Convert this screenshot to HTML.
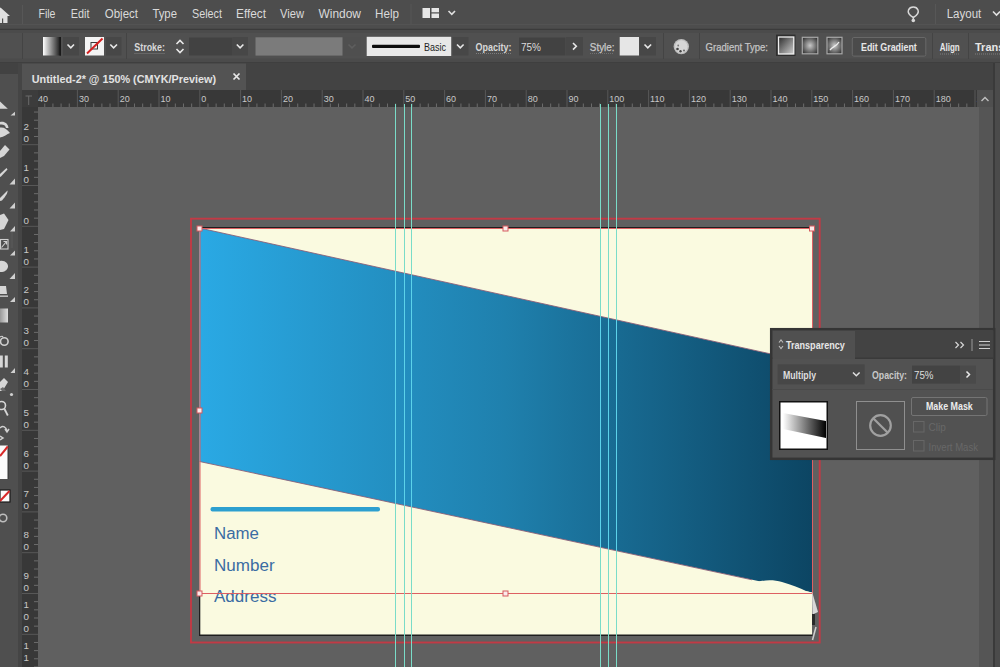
<!DOCTYPE html>
<html><head><meta charset="utf-8">
<style>
*{margin:0;padding:0;box-sizing:border-box}
html,body{width:1000px;height:667px;overflow:hidden;background:#606060;font-family:"Liberation Sans",sans-serif}
svg{position:absolute;left:0;top:0}
text{font-family:"Liberation Sans",sans-serif}
.m{font-size:12.5px;fill:#dadada}
.c{font-size:11px;fill:#d8d8d8;font-weight:bold}
.rn{font-size:9px;fill:#c8c8c8}
.rv{font-size:9.8px;fill:#c8c8c8}
.p{font-size:10.5px;fill:#dedede}
</style></head><body>
<svg width="1000" height="667" viewBox="0 0 1000 667">
<defs>
  <linearGradient id="g1" x1="199.5" y1="0" x2="812" y2="0" gradientUnits="userSpaceOnUse">
    <stop offset="0" stop-color="#2aa9e4"/>
    <stop offset="0.5" stop-color="#1f80ad"/>
    <stop offset="1" stop-color="#0c4563"/>
  </linearGradient>
  <linearGradient id="gw" x1="0" y1="0" x2="1" y2="0">
    <stop offset="0" stop-color="#ffffff"/>
    <stop offset="1" stop-color="#111111"/>
  </linearGradient>
  <linearGradient id="gd" x1="0" y1="0" x2="1" y2="1">
    <stop offset="0" stop-color="#2a2a2a"/>
    <stop offset="1" stop-color="#d0d0d0"/>
  </linearGradient>
  <radialGradient id="gr" cx="0.5" cy="0.5" r="0.6">
    <stop offset="0" stop-color="#c8c8c8"/>
    <stop offset="1" stop-color="#3a3a3a"/>
  </radialGradient>
  <linearGradient id="gtool" x1="0" y1="0" x2="1" y2="0">
    <stop offset="0" stop-color="#999"/>
    <stop offset="1" stop-color="#ddd"/>
  </linearGradient>
  <linearGradient id="gt" x1="0" y1="0" x2="1" y2="0">
    <stop offset="0" stop-color="#ffffff"/>
    <stop offset="1" stop-color="#000000"/>
  </linearGradient>
  <clipPath id="cpb"><polygon points="199.5,228 812,363 812,592.5 199.5,461.5"/></clipPath>
</defs>

<!-- ============ MENU BAR ============ -->
<rect x="0" y="0" width="1000" height="28.5" fill="#4d4d4d"/>
<rect x="0" y="24" width="1000" height="1" fill="#535353"/>
<rect x="0" y="28.5" width="1000" height="1.5" fill="#3b3b3b"/>
<!-- home icon -->
<path d="M-9 16 L0.5 7.5 L10 16 L7.5 16 L7.5 23 L3.2 23 L3.2 18.5 L2 18.5 L2 23 L-7 23 Z" fill="#e0e0e0"/>
<rect x="22" y="5" width="1" height="19" fill="#575757"/>
<text class="m" x="38.5" y="18" textLength="17" lengthAdjust="spacingAndGlyphs">File</text>
<text class="m" x="70.8" y="18" textLength="18.7" lengthAdjust="spacingAndGlyphs">Edit</text>
<text class="m" x="104.8" y="18" textLength="33.2" lengthAdjust="spacingAndGlyphs">Object</text>
<text class="m" x="152.4" y="18" textLength="24.6" lengthAdjust="spacingAndGlyphs">Type</text>
<text class="m" x="192" y="18" textLength="30" lengthAdjust="spacingAndGlyphs">Select</text>
<text class="m" x="236" y="18" textLength="30" lengthAdjust="spacingAndGlyphs">Effect</text>
<text class="m" x="280" y="18" textLength="24" lengthAdjust="spacingAndGlyphs">View</text>
<text class="m" x="318.5" y="18" textLength="42.5" lengthAdjust="spacingAndGlyphs">Window</text>
<text class="m" x="375" y="18" textLength="24" lengthAdjust="spacingAndGlyphs">Help</text>
<rect x="410.5" y="4" width="1" height="20" fill="#575757"/>
<!-- workspace icon -->
<rect x="422.5" y="8" width="7.5" height="10" fill="#e6e6e6"/>
<rect x="431.5" y="8" width="7.5" height="4.3" fill="#e6e6e6"/>
<rect x="431.5" y="13.5" width="7.5" height="4.5" fill="#e6e6e6"/>
<path d="M448.5 11 L451.8 14.3 L455 11" fill="none" stroke="#e0e0e0" stroke-width="1.6"/>
<!-- bulb -->
<path d="M913.3 20 L913.3 17.5 C909 15 907.5 12.5 908.5 10 C909.5 7.5 911.5 7 913.3 7 C915 7 917 7.5 918 10 C919 12.5 917.5 15 913.3 17.5" fill="none" stroke="#d8d8d8" stroke-width="1.5"/>
<circle cx="913.3" cy="20.5" r="1.8" fill="#d8d8d8"/>
<rect x="935" y="4" width="1" height="20" fill="#575757"/>
<text class="m" x="946.7" y="17.8" textLength="34.6" lengthAdjust="spacingAndGlyphs">Layout</text>
<path d="M993 11.5 L996.5 15 L1000 11.5" fill="none" stroke="#e0e0e0" stroke-width="1.6"/>

<!-- ============ CONTROL BAR ============ -->
<rect x="0" y="30" width="1000" height="32" fill="#4b4b4b"/>
<rect x="0" y="33" width="1000" height="25.5" fill="#505050"/>
<rect x="0" y="62" width="1000" height="1" fill="#3f3f3f"/>
<!-- group separators -->
<rect x="22" y="33" width="1" height="26" fill="#444"/>
<rect x="126" y="33" width="1" height="26" fill="#444"/>
<rect x="663" y="33" width="1" height="26" fill="#444"/>
<rect x="699" y="33" width="1" height="26" fill="#444"/>
<rect x="932" y="33" width="1" height="26" fill="#444"/>
<rect x="968" y="33" width="1" height="26" fill="#444"/>
<!-- fill swatch -->
<rect x="43" y="37" width="18" height="18.5" fill="url(#gw)"/>
<rect x="59.5" y="37" width="1.5" height="18.5" fill="#1a1a1a"/>
<rect x="63" y="37" width="16" height="18.5" fill="#474747"/>
<path d="M67.5 44.5 L70.8 47.8 L74 44.5" fill="none" stroke="#e8e8e8" stroke-width="1.6"/>
<!-- stroke swatch -->
<rect x="85" y="37" width="19" height="18.5" fill="#f4f4f4"/>
<rect x="91" y="42.5" width="6.5" height="6.5" fill="none" stroke="#3a3a3a" stroke-width="1"/>
<path d="M87 53.5 L102.5 38.5" stroke="#d42020" stroke-width="2"/>
<rect x="106" y="37" width="15.5" height="18.5" fill="#474747"/>
<path d="M110.3 44.5 L113.6 47.8 L117 44.5" fill="none" stroke="#e8e8e8" stroke-width="1.6"/>
<!-- Stroke: -->
<text class="c" x="134.3" y="50.5" textLength="30.6" lengthAdjust="spacingAndGlyphs">Stroke:</text>
<path d="M134.5 53.5 H165" stroke="#8a8a8a" stroke-width="0.8" stroke-dasharray="1 1"/>

<path d="M176.5 44 L180 40.5 L183.5 44 M176.5 49 L180 52.5 L183.5 49" fill="none" stroke="#e8e8e8" stroke-width="1.6"/>
<rect x="189" y="37.5" width="43.5" height="18" fill="#424242"/>
<rect x="232.5" y="37" width="15.5" height="18.5" fill="#474747"/>
<path d="M236.8 44.5 L240.1 47.8 L243.4 44.5" fill="none" stroke="#e8e8e8" stroke-width="1.6"/>
<!-- gray field -->
<rect x="255.5" y="37.3" width="87" height="18.3" fill="#7b7b7b"/>
<rect x="343" y="37" width="18" height="18.5" fill="#4f4f4f"/>
<path d="M348.5 44.5 L352 47.8 L355.5 44.5" fill="none" stroke="#5e5e5e" stroke-width="1.6"/>
<!-- Basic -->
<rect x="366.7" y="36.8" width="84.5" height="19.2" fill="#e8e8e8"/>
<rect x="372" y="44.8" width="48" height="3.2" rx="1" fill="#0d0d0d"/>
<text x="424" y="50.7" font-size="11" fill="#1f1f1f" textLength="22" lengthAdjust="spacingAndGlyphs">Basic</text>
<rect x="452.5" y="37" width="16" height="18.5" fill="#474747"/>
<path d="M457 44.5 L460.3 47.8 L463.6 44.5" fill="none" stroke="#e8e8e8" stroke-width="1.6"/>
<!-- Opacity -->
<text class="c" x="475.6" y="50.5" textLength="35.8" lengthAdjust="spacingAndGlyphs">Opacity:</text>
<path d="M476 53.5 H511" stroke="#8a8a8a" stroke-width="0.8" stroke-dasharray="1 1"/>
<rect x="519" y="37.5" width="46.5" height="18" fill="#424242"/>
<text x="521" y="50.5" font-size="11" fill="#dcdcdc" textLength="20" lengthAdjust="spacingAndGlyphs">75%</text>
<rect x="566" y="37" width="17" height="18.5" fill="#474747"/>
<path d="M573 43 L576.3 46.3 L573 49.6" fill="none" stroke="#e8e8e8" stroke-width="1.6"/>
<!-- Style -->
<text class="c" x="589.8" y="50.5" textLength="24.7" lengthAdjust="spacingAndGlyphs" style="fill:#c8c8c8;font-weight:normal;stroke:#c8c8c8;stroke-width:0.25">Style:</text>
<path d="M590 53.5 H614" stroke="#7a7a7a" stroke-width="0.8" stroke-dasharray="1 1"/>
<rect x="619.7" y="37" width="19.3" height="18.5" fill="#e6e6e6"/>
<rect x="639.5" y="37" width="16.5" height="18.5" fill="#474747"/>
<path d="M644.5 44.5 L647.8 47.8 L651.1 44.5" fill="none" stroke="#e8e8e8" stroke-width="1.6"/>
<!-- globe -->
<circle cx="681.3" cy="46.6" r="7.7" fill="#bdbdbd"/>
<circle cx="681.3" cy="46.6" r="6.3" fill="#d6d6d6"/>
<circle cx="677.5" cy="49" r="1.3" fill="#444"/>
<circle cx="680.5" cy="51.3" r="1.2" fill="#444"/>
<circle cx="678.2" cy="45.5" r="0.9" fill="#777"/>
<circle cx="684" cy="50.5" r="1" fill="#666"/>
<!-- Gradient Type -->
<text class="c" x="705.6" y="50.5" textLength="62.4" lengthAdjust="spacingAndGlyphs" style="fill:#c4c4c4;font-weight:normal;stroke:#c4c4c4;stroke-width:0.25">Gradient Type:</text>
<rect x="776" y="34.6" width="19.5" height="21.4" fill="#2f2f2f"/>
<rect x="778.5" y="37" width="15.3" height="17" fill="url(#gd)" stroke="#f0f0f0" stroke-width="1.3"/>
<rect x="802.3" y="37.3" width="15.5" height="16.5" fill="url(#gr)" stroke="#a8a8a8" stroke-width="1.2"/>
<rect x="827" y="37.3" width="15" height="16.5" fill="url(#gr)" stroke="#a8a8a8" stroke-width="1.2"/>
<path d="M830 50 C833 46 836 47 839 42" stroke="#eee" stroke-width="1.3" fill="none"/>
<!-- Edit Gradient -->
<rect x="852.3" y="37.5" width="73.5" height="18.6" rx="1.5" fill="#4b4b4b" stroke="#686868" stroke-width="1"/>
<text class="c" x="861" y="51" textLength="55.8" lengthAdjust="spacingAndGlyphs" style="fill:#e6e6e6">Edit Gradient</text>
<text class="c" x="939.7" y="51" textLength="20" lengthAdjust="spacingAndGlyphs" style="fill:#e6e6e6">Align</text>
<path d="M940 54 H960" stroke="#8a8a8a" stroke-width="0.8" stroke-dasharray="1 1"/>
<text class="c" x="975" y="51" style="fill:#e6e6e6">Transform</text>
<path d="M975 54 H1000" stroke="#8a8a8a" stroke-width="0.8" stroke-dasharray="1 1"/>

<!-- ============ TOOLBAR (left) ============ -->
<rect x="0" y="63" width="20" height="604" fill="#4f4f4f"/>
<rect x="0" y="63" width="20" height="11" fill="#424242"/>
<rect x="18" y="63" width="4" height="604" fill="#454545"/>
<g fill="#d6d6d6">
  <path d="M0 101.5 L7.8 108.8 L0 108.8 Z"/>
  <path d="M15 111.8 L15 115.5 L10.5 115.5 Z" fill="#cfcfcf"/>
  <path d="M0 122 C4 121 8 123 8.5 128 L6 128 C5.5 125 3 124 0 124.5 Z"/>
  <path d="M0 127.5 C4 127 7 129 10 133 C7 134 4 137 0 137.5 Z"/>
  <path d="M0 151 L5 145 L9.5 149.5 L4 156 L0 158 Z"/>
  <path d="M0 174 L6.5 168 L7.5 169.5 L1 176.5 L0 177 Z"/>
  <path d="M15 178.5 L15 184.5 L9.5 184.5 Z" fill="#cfcfcf"/>
  <path d="M0 198 L7.5 190.5 C8 192 6 196 2 200.5 L0 201 Z"/>
  <path d="M15 202.5 L15 208.5 L9.5 208.5 Z" fill="#cfcfcf"/>
  <path d="M0 215 L4 213.5 L8.5 220 L4 229 L0 230 Z"/>
  <path d="M15 226 L15 231.5 L10 231.5 Z" fill="#cfcfcf"/>
  <path d="M15 250.5 L15 255.5 L10 255.5 Z" fill="#cfcfcf"/>
  <path d="M0 261 C5 260 8.5 264 8 267 C7 271 3 272.5 0 272 Z"/>
  <path d="M15 273 L15 279 L9.5 279 Z" fill="#cfcfcf"/>
  <path d="M0 286 L6 286 L7 294 L0 294 Z"/>
  <rect x="0" y="295.5" width="8" height="1.3"/>
  <path d="M15 297 L15 302 L10 302 Z" fill="#cfcfcf"/>
  <rect x="0" y="355.5" width="2.8" height="12"/>
  <rect x="4.8" y="355.5" width="3" height="12"/>
  <path d="M15 368 L15 373 L10.5 373 Z" fill="#cfcfcf"/>
  <path d="M0 382 L4 378 L8 382 L2.5 391 L0 391 Z"/>
  <path d="M0 389 L3 387 L6 391 L2 391 Z" fill="#6a6a6a"/>
  <circle cx="11.5" cy="394.5" r="1.6" fill="#cfcfcf"/>
</g>
<rect x="0.5" y="239.5" width="7.5" height="9.5" fill="none" stroke="#cfcfcf" stroke-width="1.1"/>
<path d="M1.5 247.5 L6.5 241.5 M3.5 241.5 H6.5 V244.5" fill="none" stroke="#cfcfcf" stroke-width="1.1"/>
<rect x="10.5" y="232" width="2.5" height="16" fill="#555"/>
<rect x="0" y="308.5" width="8" height="14" fill="url(#gtool)"/>
<circle cx="4.3" cy="341.5" r="3.8" fill="none" stroke="#cfcfcf" stroke-width="1.6"/>
<path d="M0 337 C1.5 336 2.5 336 3 337" stroke="#cfcfcf" stroke-width="1.2" fill="none"/>
<circle cx="1.5" cy="405.5" r="4" fill="none" stroke="#d6d6d6" stroke-width="1.6"/>
<path d="M4.5 409 L7.8 415.5" stroke="#d6d6d6" stroke-width="1.8"/>
<path d="M0 428 C3 425 6 427 7 431 M5 429 L7 432 L9 429 M0 436 L3 438 L0 440" fill="none" stroke="#d0d0d0" stroke-width="1.5"/>
<rect x="0" y="445.5" width="8" height="33.5" fill="#fbfbfb"/>
<rect x="7.5" y="445.5" width="1.2" height="33.5" fill="#3a3a3a"/>
<path d="M0 456 L7.8 446.5" stroke="#d82828" stroke-width="2"/>
<rect x="0" y="490" width="10" height="12" fill="#fbfbfb"/>
<rect x="0" y="490" width="10" height="12" fill="none" stroke="#1a1a1a" stroke-width="1.2"/>
<path d="M0 501 L9.5 491" stroke="#d82828" stroke-width="2"/>
<circle cx="3" cy="518" r="3.8" fill="none" stroke="#bdbdbd" stroke-width="1.6"/>

<!-- ============ TAB BAR ============ -->
<rect x="22" y="63" width="978" height="27" fill="#434343"/>
<rect x="22" y="63.5" width="224" height="26.5" fill="#535353"/>
<text x="31.8" y="82.5" font-size="11.5" font-weight="bold" fill="#e2e2e2" textLength="184.2" lengthAdjust="spacingAndGlyphs">Untitled-2* @ 150% (CMYK/Preview)</text>
<path d="M233.5 73.5 L239.5 79.5 M239.5 73.5 L233.5 79.5" stroke="#e8e8e8" stroke-width="1.7"/>

<!-- ============ RULERS ============ -->
<rect x="38" y="90" width="939" height="17" fill="#383838"/>
<rect x="36.10" y="90" width="1" height="17" fill="#585858"/>
<text x="38.10" y="102" class="rn">40</text>
<rect x="44.26" y="103.5" width="1" height="3.5" fill="#6c6c6c"/>
<rect x="52.42" y="103.5" width="1" height="3.5" fill="#6c6c6c"/>
<rect x="60.58" y="103.5" width="1" height="3.5" fill="#6c6c6c"/>
<rect x="68.74" y="103.5" width="1" height="3.5" fill="#6c6c6c"/>
<rect x="76.90" y="90" width="1" height="17" fill="#585858"/>
<text x="78.90" y="102" class="rn">30</text>
<rect x="85.06" y="103.5" width="1" height="3.5" fill="#6c6c6c"/>
<rect x="93.22" y="103.5" width="1" height="3.5" fill="#6c6c6c"/>
<rect x="101.38" y="103.5" width="1" height="3.5" fill="#6c6c6c"/>
<rect x="109.54" y="103.5" width="1" height="3.5" fill="#6c6c6c"/>
<rect x="117.70" y="90" width="1" height="17" fill="#585858"/>
<text x="119.70" y="102" class="rn">20</text>
<rect x="125.86" y="103.5" width="1" height="3.5" fill="#6c6c6c"/>
<rect x="134.02" y="103.5" width="1" height="3.5" fill="#6c6c6c"/>
<rect x="142.18" y="103.5" width="1" height="3.5" fill="#6c6c6c"/>
<rect x="150.34" y="103.5" width="1" height="3.5" fill="#6c6c6c"/>
<rect x="158.50" y="90" width="1" height="17" fill="#585858"/>
<text x="160.50" y="102" class="rn">10</text>
<rect x="166.66" y="103.5" width="1" height="3.5" fill="#6c6c6c"/>
<rect x="174.82" y="103.5" width="1" height="3.5" fill="#6c6c6c"/>
<rect x="182.98" y="103.5" width="1" height="3.5" fill="#6c6c6c"/>
<rect x="191.14" y="103.5" width="1" height="3.5" fill="#6c6c6c"/>
<rect x="199.30" y="90" width="1" height="17" fill="#585858"/>
<text x="201.30" y="102" class="rn">0</text>
<rect x="207.46" y="103.5" width="1" height="3.5" fill="#6c6c6c"/>
<rect x="215.62" y="103.5" width="1" height="3.5" fill="#6c6c6c"/>
<rect x="223.78" y="103.5" width="1" height="3.5" fill="#6c6c6c"/>
<rect x="231.94" y="103.5" width="1" height="3.5" fill="#6c6c6c"/>
<rect x="240.10" y="90" width="1" height="17" fill="#585858"/>
<text x="242.10" y="102" class="rn">10</text>
<rect x="248.26" y="103.5" width="1" height="3.5" fill="#6c6c6c"/>
<rect x="256.42" y="103.5" width="1" height="3.5" fill="#6c6c6c"/>
<rect x="264.58" y="103.5" width="1" height="3.5" fill="#6c6c6c"/>
<rect x="272.74" y="103.5" width="1" height="3.5" fill="#6c6c6c"/>
<rect x="280.90" y="90" width="1" height="17" fill="#585858"/>
<text x="282.90" y="102" class="rn">20</text>
<rect x="289.06" y="103.5" width="1" height="3.5" fill="#6c6c6c"/>
<rect x="297.22" y="103.5" width="1" height="3.5" fill="#6c6c6c"/>
<rect x="305.38" y="103.5" width="1" height="3.5" fill="#6c6c6c"/>
<rect x="313.54" y="103.5" width="1" height="3.5" fill="#6c6c6c"/>
<rect x="321.70" y="90" width="1" height="17" fill="#585858"/>
<text x="323.70" y="102" class="rn">30</text>
<rect x="329.86" y="103.5" width="1" height="3.5" fill="#6c6c6c"/>
<rect x="338.02" y="103.5" width="1" height="3.5" fill="#6c6c6c"/>
<rect x="346.18" y="103.5" width="1" height="3.5" fill="#6c6c6c"/>
<rect x="354.34" y="103.5" width="1" height="3.5" fill="#6c6c6c"/>
<rect x="362.50" y="90" width="1" height="17" fill="#585858"/>
<text x="364.50" y="102" class="rn">40</text>
<rect x="370.66" y="103.5" width="1" height="3.5" fill="#6c6c6c"/>
<rect x="378.82" y="103.5" width="1" height="3.5" fill="#6c6c6c"/>
<rect x="386.98" y="103.5" width="1" height="3.5" fill="#6c6c6c"/>
<rect x="395.14" y="103.5" width="1" height="3.5" fill="#6c6c6c"/>
<rect x="403.30" y="90" width="1" height="17" fill="#585858"/>
<text x="405.30" y="102" class="rn">50</text>
<rect x="411.46" y="103.5" width="1" height="3.5" fill="#6c6c6c"/>
<rect x="419.62" y="103.5" width="1" height="3.5" fill="#6c6c6c"/>
<rect x="427.78" y="103.5" width="1" height="3.5" fill="#6c6c6c"/>
<rect x="435.94" y="103.5" width="1" height="3.5" fill="#6c6c6c"/>
<rect x="444.10" y="90" width="1" height="17" fill="#585858"/>
<text x="446.10" y="102" class="rn">60</text>
<rect x="452.26" y="103.5" width="1" height="3.5" fill="#6c6c6c"/>
<rect x="460.42" y="103.5" width="1" height="3.5" fill="#6c6c6c"/>
<rect x="468.58" y="103.5" width="1" height="3.5" fill="#6c6c6c"/>
<rect x="476.74" y="103.5" width="1" height="3.5" fill="#6c6c6c"/>
<rect x="484.90" y="90" width="1" height="17" fill="#585858"/>
<text x="486.90" y="102" class="rn">70</text>
<rect x="493.06" y="103.5" width="1" height="3.5" fill="#6c6c6c"/>
<rect x="501.22" y="103.5" width="1" height="3.5" fill="#6c6c6c"/>
<rect x="509.38" y="103.5" width="1" height="3.5" fill="#6c6c6c"/>
<rect x="517.54" y="103.5" width="1" height="3.5" fill="#6c6c6c"/>
<rect x="525.70" y="90" width="1" height="17" fill="#585858"/>
<text x="527.70" y="102" class="rn">80</text>
<rect x="533.86" y="103.5" width="1" height="3.5" fill="#6c6c6c"/>
<rect x="542.02" y="103.5" width="1" height="3.5" fill="#6c6c6c"/>
<rect x="550.18" y="103.5" width="1" height="3.5" fill="#6c6c6c"/>
<rect x="558.34" y="103.5" width="1" height="3.5" fill="#6c6c6c"/>
<rect x="566.50" y="90" width="1" height="17" fill="#585858"/>
<text x="568.50" y="102" class="rn">90</text>
<rect x="574.66" y="103.5" width="1" height="3.5" fill="#6c6c6c"/>
<rect x="582.82" y="103.5" width="1" height="3.5" fill="#6c6c6c"/>
<rect x="590.98" y="103.5" width="1" height="3.5" fill="#6c6c6c"/>
<rect x="599.14" y="103.5" width="1" height="3.5" fill="#6c6c6c"/>
<rect x="607.30" y="90" width="1" height="17" fill="#585858"/>
<text x="609.30" y="102" class="rn">100</text>
<rect x="615.46" y="103.5" width="1" height="3.5" fill="#6c6c6c"/>
<rect x="623.62" y="103.5" width="1" height="3.5" fill="#6c6c6c"/>
<rect x="631.78" y="103.5" width="1" height="3.5" fill="#6c6c6c"/>
<rect x="639.94" y="103.5" width="1" height="3.5" fill="#6c6c6c"/>
<rect x="648.10" y="90" width="1" height="17" fill="#585858"/>
<text x="650.10" y="102" class="rn">110</text>
<rect x="656.26" y="103.5" width="1" height="3.5" fill="#6c6c6c"/>
<rect x="664.42" y="103.5" width="1" height="3.5" fill="#6c6c6c"/>
<rect x="672.58" y="103.5" width="1" height="3.5" fill="#6c6c6c"/>
<rect x="680.74" y="103.5" width="1" height="3.5" fill="#6c6c6c"/>
<rect x="688.90" y="90" width="1" height="17" fill="#585858"/>
<text x="690.90" y="102" class="rn">120</text>
<rect x="697.06" y="103.5" width="1" height="3.5" fill="#6c6c6c"/>
<rect x="705.22" y="103.5" width="1" height="3.5" fill="#6c6c6c"/>
<rect x="713.38" y="103.5" width="1" height="3.5" fill="#6c6c6c"/>
<rect x="721.54" y="103.5" width="1" height="3.5" fill="#6c6c6c"/>
<rect x="729.70" y="90" width="1" height="17" fill="#585858"/>
<text x="731.70" y="102" class="rn">130</text>
<rect x="737.86" y="103.5" width="1" height="3.5" fill="#6c6c6c"/>
<rect x="746.02" y="103.5" width="1" height="3.5" fill="#6c6c6c"/>
<rect x="754.18" y="103.5" width="1" height="3.5" fill="#6c6c6c"/>
<rect x="762.34" y="103.5" width="1" height="3.5" fill="#6c6c6c"/>
<rect x="770.50" y="90" width="1" height="17" fill="#585858"/>
<text x="772.50" y="102" class="rn">140</text>
<rect x="778.66" y="103.5" width="1" height="3.5" fill="#6c6c6c"/>
<rect x="786.82" y="103.5" width="1" height="3.5" fill="#6c6c6c"/>
<rect x="794.98" y="103.5" width="1" height="3.5" fill="#6c6c6c"/>
<rect x="803.14" y="103.5" width="1" height="3.5" fill="#6c6c6c"/>
<rect x="811.30" y="90" width="1" height="17" fill="#585858"/>
<text x="813.30" y="102" class="rn">150</text>
<rect x="819.46" y="103.5" width="1" height="3.5" fill="#6c6c6c"/>
<rect x="827.62" y="103.5" width="1" height="3.5" fill="#6c6c6c"/>
<rect x="835.78" y="103.5" width="1" height="3.5" fill="#6c6c6c"/>
<rect x="843.94" y="103.5" width="1" height="3.5" fill="#6c6c6c"/>
<rect x="852.10" y="90" width="1" height="17" fill="#585858"/>
<text x="854.10" y="102" class="rn">160</text>
<rect x="860.26" y="103.5" width="1" height="3.5" fill="#6c6c6c"/>
<rect x="868.42" y="103.5" width="1" height="3.5" fill="#6c6c6c"/>
<rect x="876.58" y="103.5" width="1" height="3.5" fill="#6c6c6c"/>
<rect x="884.74" y="103.5" width="1" height="3.5" fill="#6c6c6c"/>
<rect x="892.90" y="90" width="1" height="17" fill="#585858"/>
<text x="894.90" y="102" class="rn">170</text>
<rect x="901.06" y="103.5" width="1" height="3.5" fill="#6c6c6c"/>
<rect x="909.22" y="103.5" width="1" height="3.5" fill="#6c6c6c"/>
<rect x="917.38" y="103.5" width="1" height="3.5" fill="#6c6c6c"/>
<rect x="925.54" y="103.5" width="1" height="3.5" fill="#6c6c6c"/>
<rect x="933.70" y="90" width="1" height="17" fill="#585858"/>
<text x="935.70" y="102" class="rn">180</text>
<rect x="941.86" y="103.5" width="1" height="3.5" fill="#6c6c6c"/>
<rect x="950.02" y="103.5" width="1" height="3.5" fill="#6c6c6c"/>
<rect x="958.18" y="103.5" width="1" height="3.5" fill="#6c6c6c"/>
<rect x="966.34" y="103.5" width="1" height="3.5" fill="#6c6c6c"/>
<rect x="974.50" y="90" width="1" height="17" fill="#585858"/>
<text x="976.50" y="102" class="rn">190</text>
<rect x="22" y="107" width="16" height="560" fill="#383838"/>
<rect x="34" y="111.56" width="4" height="1" fill="#6c6c6c"/>
<rect x="34" y="119.72" width="4" height="1" fill="#6c6c6c"/>
<rect x="34" y="127.88" width="4" height="1" fill="#6c6c6c"/>
<rect x="34" y="136.04" width="4" height="1" fill="#6c6c6c"/>
<rect x="22" y="144.20" width="16" height="1" fill="#585858"/>
<text x="26.2" y="130.20" class="rv" text-anchor="middle">2</text>
<text x="26.2" y="142.20" class="rv" text-anchor="middle">0</text>
<rect x="34" y="152.36" width="4" height="1" fill="#6c6c6c"/>
<rect x="34" y="160.52" width="4" height="1" fill="#6c6c6c"/>
<rect x="34" y="168.68" width="4" height="1" fill="#6c6c6c"/>
<rect x="34" y="176.84" width="4" height="1" fill="#6c6c6c"/>
<rect x="22" y="185.00" width="16" height="1" fill="#585858"/>
<text x="26.2" y="171.00" class="rv" text-anchor="middle">1</text>
<text x="26.2" y="183.00" class="rv" text-anchor="middle">0</text>
<rect x="34" y="193.16" width="4" height="1" fill="#6c6c6c"/>
<rect x="34" y="201.32" width="4" height="1" fill="#6c6c6c"/>
<rect x="34" y="209.48" width="4" height="1" fill="#6c6c6c"/>
<rect x="34" y="217.64" width="4" height="1" fill="#6c6c6c"/>
<rect x="22" y="225.80" width="16" height="1" fill="#585858"/>
<text x="26.2" y="223.80" class="rv" text-anchor="middle">0</text>
<rect x="34" y="233.96" width="4" height="1" fill="#6c6c6c"/>
<rect x="34" y="242.12" width="4" height="1" fill="#6c6c6c"/>
<rect x="34" y="250.28" width="4" height="1" fill="#6c6c6c"/>
<rect x="34" y="258.44" width="4" height="1" fill="#6c6c6c"/>
<rect x="22" y="266.60" width="16" height="1" fill="#585858"/>
<text x="26.2" y="252.60" class="rv" text-anchor="middle">1</text>
<text x="26.2" y="264.60" class="rv" text-anchor="middle">0</text>
<rect x="34" y="274.76" width="4" height="1" fill="#6c6c6c"/>
<rect x="34" y="282.92" width="4" height="1" fill="#6c6c6c"/>
<rect x="34" y="291.08" width="4" height="1" fill="#6c6c6c"/>
<rect x="34" y="299.24" width="4" height="1" fill="#6c6c6c"/>
<rect x="22" y="307.40" width="16" height="1" fill="#585858"/>
<text x="26.2" y="293.40" class="rv" text-anchor="middle">2</text>
<text x="26.2" y="305.40" class="rv" text-anchor="middle">0</text>
<rect x="34" y="315.56" width="4" height="1" fill="#6c6c6c"/>
<rect x="34" y="323.72" width="4" height="1" fill="#6c6c6c"/>
<rect x="34" y="331.88" width="4" height="1" fill="#6c6c6c"/>
<rect x="34" y="340.04" width="4" height="1" fill="#6c6c6c"/>
<rect x="22" y="348.20" width="16" height="1" fill="#585858"/>
<text x="26.2" y="334.20" class="rv" text-anchor="middle">3</text>
<text x="26.2" y="346.20" class="rv" text-anchor="middle">0</text>
<rect x="34" y="356.36" width="4" height="1" fill="#6c6c6c"/>
<rect x="34" y="364.52" width="4" height="1" fill="#6c6c6c"/>
<rect x="34" y="372.68" width="4" height="1" fill="#6c6c6c"/>
<rect x="34" y="380.84" width="4" height="1" fill="#6c6c6c"/>
<rect x="22" y="389.00" width="16" height="1" fill="#585858"/>
<text x="26.2" y="375.00" class="rv" text-anchor="middle">4</text>
<text x="26.2" y="387.00" class="rv" text-anchor="middle">0</text>
<rect x="34" y="397.16" width="4" height="1" fill="#6c6c6c"/>
<rect x="34" y="405.32" width="4" height="1" fill="#6c6c6c"/>
<rect x="34" y="413.48" width="4" height="1" fill="#6c6c6c"/>
<rect x="34" y="421.64" width="4" height="1" fill="#6c6c6c"/>
<rect x="22" y="429.80" width="16" height="1" fill="#585858"/>
<text x="26.2" y="415.80" class="rv" text-anchor="middle">5</text>
<text x="26.2" y="427.80" class="rv" text-anchor="middle">0</text>
<rect x="34" y="437.96" width="4" height="1" fill="#6c6c6c"/>
<rect x="34" y="446.12" width="4" height="1" fill="#6c6c6c"/>
<rect x="34" y="454.28" width="4" height="1" fill="#6c6c6c"/>
<rect x="34" y="462.44" width="4" height="1" fill="#6c6c6c"/>
<rect x="22" y="470.60" width="16" height="1" fill="#585858"/>
<text x="26.2" y="456.60" class="rv" text-anchor="middle">6</text>
<text x="26.2" y="468.60" class="rv" text-anchor="middle">0</text>
<rect x="34" y="478.76" width="4" height="1" fill="#6c6c6c"/>
<rect x="34" y="486.92" width="4" height="1" fill="#6c6c6c"/>
<rect x="34" y="495.08" width="4" height="1" fill="#6c6c6c"/>
<rect x="34" y="503.24" width="4" height="1" fill="#6c6c6c"/>
<rect x="22" y="511.40" width="16" height="1" fill="#585858"/>
<text x="26.2" y="497.40" class="rv" text-anchor="middle">7</text>
<text x="26.2" y="509.40" class="rv" text-anchor="middle">0</text>
<rect x="34" y="519.56" width="4" height="1" fill="#6c6c6c"/>
<rect x="34" y="527.72" width="4" height="1" fill="#6c6c6c"/>
<rect x="34" y="535.88" width="4" height="1" fill="#6c6c6c"/>
<rect x="34" y="544.04" width="4" height="1" fill="#6c6c6c"/>
<rect x="22" y="552.20" width="16" height="1" fill="#585858"/>
<text x="26.2" y="538.20" class="rv" text-anchor="middle">8</text>
<text x="26.2" y="550.20" class="rv" text-anchor="middle">0</text>
<rect x="34" y="560.36" width="4" height="1" fill="#6c6c6c"/>
<rect x="34" y="568.52" width="4" height="1" fill="#6c6c6c"/>
<rect x="34" y="576.68" width="4" height="1" fill="#6c6c6c"/>
<rect x="34" y="584.84" width="4" height="1" fill="#6c6c6c"/>
<rect x="22" y="593.00" width="16" height="1" fill="#585858"/>
<text x="26.2" y="579.00" class="rv" text-anchor="middle">9</text>
<text x="26.2" y="591.00" class="rv" text-anchor="middle">0</text>
<rect x="34" y="601.16" width="4" height="1" fill="#6c6c6c"/>
<rect x="34" y="609.32" width="4" height="1" fill="#6c6c6c"/>
<rect x="34" y="617.48" width="4" height="1" fill="#6c6c6c"/>
<rect x="34" y="625.64" width="4" height="1" fill="#6c6c6c"/>
<rect x="22" y="633.80" width="16" height="1" fill="#585858"/>
<text x="26.2" y="607.80" class="rv" text-anchor="middle">1</text>
<text x="26.2" y="619.80" class="rv" text-anchor="middle">0</text>
<text x="26.2" y="631.80" class="rv" text-anchor="middle">0</text>
<rect x="34" y="641.96" width="4" height="1" fill="#6c6c6c"/>
<rect x="34" y="650.12" width="4" height="1" fill="#6c6c6c"/>
<rect x="34" y="658.28" width="4" height="1" fill="#6c6c6c"/>
<rect x="34" y="666.44" width="4" height="1" fill="#6c6c6c"/>
<rect x="22" y="674.60" width="16" height="1" fill="#585858"/>
<text x="26.2" y="648.60" class="rv" text-anchor="middle">1</text>
<text x="26.2" y="660.60" class="rv" text-anchor="middle">1</text>
<text x="26.2" y="672.60" class="rv" text-anchor="middle">0</text>
<rect x="34" y="682.76" width="4" height="1" fill="#6c6c6c"/>
<rect x="34" y="690.92" width="4" height="1" fill="#6c6c6c"/>
<rect x="34" y="699.08" width="4" height="1" fill="#6c6c6c"/>
<rect x="22" y="90" width="16" height="17" fill="#3c3c3c"/>
<path d="M25.5 96 H32 M28.7 96 V105" stroke="#6a6a6a" stroke-width="1"/>

<!-- right scroll column -->
<rect x="977" y="90" width="16" height="17" fill="#4f4f4f"/>
<rect x="979" y="107" width="14" height="560" fill="#555555"/>
<path d="M981.5 101 L985 97.5 L988.5 101" fill="none" stroke="#c0c0c0" stroke-width="1.4"/>
<rect x="993" y="63" width="2" height="604" fill="#3a3a3a"/>
<rect x="995" y="63" width="5" height="604" fill="#4b4b4b"/>

<!-- ============ ARTBOARD ============ -->
<rect x="191" y="218.7" width="628.7" height="423.8" fill="none" stroke="#c23a45" stroke-width="1.9"/>
<rect x="199.5" y="227.3" width="612.5" height="408" fill="#fafae0"/>
<rect x="199.5" y="227" width="613" height="1" fill="#1e1e1e"/>
<rect x="199.5" y="634.5" width="613" height="1.5" fill="#1e1e1e"/>
<rect x="199" y="593" width="1.3" height="43" fill="#1e1e1e"/>
<polygon points="199.5,228 812,363 812,592.5 199.5,461.5" fill="url(#g1)"/>
<!-- white blob bottom-right -->
<path d="M752 584 C760 580 772 579 782 582 C792 585 800 588 806 591 L812 592.5 L812 600 L752 600 Z" fill="#fafae0"/>
<!-- edges of selection -->
<polyline points="199.5,228 812,363" fill="none" stroke="#8a5a74" stroke-width="1" opacity="0.85"/>
<polyline points="199.5,461.5 752,579.8" fill="none" stroke="#8a5a74" stroke-width="1" opacity="0.85"/>
<rect x="210.5" y="507" width="169.5" height="4.5" rx="2" fill="#2c9fcf"/>
<text x="214" y="539" font-size="16" fill="#3a6ca3" textLength="45" lengthAdjust="spacingAndGlyphs">Name</text>
<text x="214" y="570.8" font-size="16" fill="#3a6ca3" textLength="60.6" lengthAdjust="spacingAndGlyphs">Number</text>
<text x="214" y="602.3" font-size="16" fill="#3a6ca3" textLength="62.4" lengthAdjust="spacingAndGlyphs">Address</text>

<!-- selection bounding box -->
<rect x="200" y="228.5" width="612.5" height="365" fill="none" stroke="#dd5f62" stroke-width="1"/>
<g fill="#fbeaea" stroke="#d45a5e" stroke-width="1">
  <rect x="197" y="226" width="5" height="5"/>
  <rect x="503" y="226" width="5" height="5"/>
  <rect x="809.5" y="226" width="5" height="5"/>
  <rect x="197" y="408" width="5" height="5"/>
  <rect x="197" y="591" width="5" height="5"/>
  <rect x="503" y="591" width="5" height="5"/>
</g>

<!-- guides -->
<g fill="#7adcc8">
  <rect x="395" y="104" width="1" height="563"/>
  <rect x="404" y="104" width="1" height="563"/>
  <rect x="411" y="104" width="1" height="563"/>
  <rect x="600" y="104" width="1" height="563"/>
  <rect x="608" y="104" width="1" height="563"/>
  <rect x="616" y="104" width="1" height="563"/>
</g>
<g fill="#5cd2ea" clip-path="url(#cpb)">
  <rect x="395" y="200" width="1" height="400"/>
  <rect x="404" y="200" width="1" height="400"/>
  <rect x="411" y="200" width="1" height="400"/>
  <rect x="600" y="200" width="1" height="400"/>
  <rect x="608" y="200" width="1" height="400"/>
  <rect x="616" y="200" width="1" height="400"/>
</g>

<!-- cursor artifact -->
<polygon points="812,591.5 818,612 812.5,614.5" fill="#d8d8d8"/>
<rect x="812" y="614" width="3" height="11" fill="#2a2a2a"/>
<path d="M816 627 L812.5 640" stroke="#cfcfcf" stroke-width="1.5"/>
<!-- ============ TRANSPARENCY PANEL ============ -->
<rect x="770" y="328" width="225" height="132" fill="#525252"/>
<rect x="771.2" y="329.2" width="223" height="129.6" fill="none" stroke="#353535" stroke-width="2.5"/>
<rect x="772.5" y="330.5" width="221" height="28.5" fill="#434343"/>
<rect x="772.5" y="357.5" width="221" height="1.5" fill="#3a3a3a"/>
<rect x="773" y="331" width="82" height="28" fill="#505050"/>
<path d="M779 342.5 L781 340 L783 342.5 M779 346 L781 348.5 L783 346" fill="none" stroke="#bdbdbd" stroke-width="1.1"/>
<text x="786" y="348.8" font-size="10.5" font-weight="bold" fill="#e6e6e6" textLength="58.8" lengthAdjust="spacingAndGlyphs">Transparency</text>
<path d="M955.5 342 L958.5 345 L955.5 348 M960.5 342 L963.5 345 L960.5 348" fill="none" stroke="#d6d6d6" stroke-width="1.2"/>
<rect x="971.5" y="339" width="1" height="12" fill="#9a9a9a"/>
<path d="M979 341.5 H990 M979 345 H990 M979 348.5 H990" stroke="#cfcfcf" stroke-width="1.2"/>
<!-- Multiply dropdown -->
<rect x="777.6" y="364.4" width="87" height="20" fill="#474747"/>
<text class="p" x="783" y="379.4" font-weight="bold" textLength="33" lengthAdjust="spacingAndGlyphs">Multiply</text>
<path d="M853 372.5 L856.3 375.8 L859.6 372.5" fill="none" stroke="#e0e0e0" stroke-width="1.5"/>
<text class="p" x="872" y="379.4" font-weight="bold" textLength="35" lengthAdjust="spacingAndGlyphs" style="fill:#c9c9c9">Opacity:</text>
<rect x="912" y="365.6" width="48.5" height="18" fill="#434343"/>
<text class="p" x="914" y="379.4" textLength="19.5" lengthAdjust="spacingAndGlyphs">75%</text>
<rect x="961" y="365.6" width="15" height="18" fill="#4a4a4a"/>
<path d="M966.5 371.5 L969.5 374.5 L966.5 377.5" fill="none" stroke="#e8e8e8" stroke-width="1.5"/>
<rect x="772" y="389" width="221" height="1" fill="#4a4a4a"/>
<!-- thumbnail -->
<rect x="779" y="401" width="49" height="49" fill="#111"/>
<rect x="780.5" y="402.5" width="46" height="46" fill="#ffffff"/>
<polygon points="783,413 826,421 826,438 783,429" fill="url(#gt)"/>
<!-- mask box -->
<rect x="856.5" y="401.5" width="48" height="48" fill="#505050" stroke="#8f8f8f" stroke-width="1"/>
<circle cx="880.5" cy="425.5" r="10.3" fill="none" stroke="#a0a0a0" stroke-width="2.2"/>
<path d="M873.2 418.2 L887.8 432.8" stroke="#a0a0a0" stroke-width="2.2"/>
<!-- Make Mask -->
<rect x="911.5" y="397.5" width="75.5" height="18" rx="1.5" fill="#505050" stroke="#747474" stroke-width="1"/>
<text class="p" x="925.9" y="410.2" font-weight="bold" textLength="46.9" lengthAdjust="spacingAndGlyphs" style="fill:#ececec">Make Mask</text>
<rect x="913.5" y="421.5" width="10.5" height="10.5" fill="none" stroke="#676767" stroke-width="1"/>
<text class="p" x="928.6" y="431.4" textLength="17.3" lengthAdjust="spacingAndGlyphs" style="fill:#686868">Clip</text>
<rect x="913.5" y="440.5" width="10.5" height="10.5" fill="none" stroke="#676767" stroke-width="1"/>
<text class="p" x="928.6" y="451" textLength="49.4" lengthAdjust="spacingAndGlyphs" style="fill:#686868">Invert Mask</text>
</svg>
</body></html>
